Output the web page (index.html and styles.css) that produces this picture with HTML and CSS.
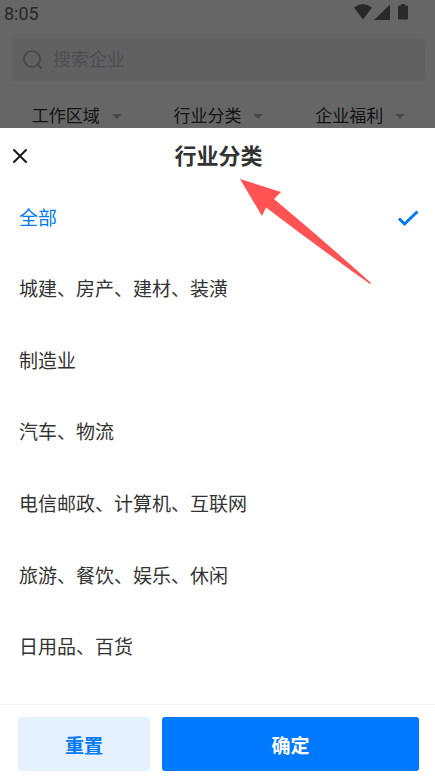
FILE: index.html
```html
<!DOCTYPE html>
<html lang="zh-CN">
<head>
<meta charset="UTF-8">
<meta name="viewport" content="width=device-width, initial-scale=1">
<title>行业分类</title>
<link rel="stylesheet" href="styles.css">
</head>
<body>
  <div class="page">
    <div class="status-bar">
      <span class="time">8:05</span>
      <svg class="status-icons" viewBox="0 0 56 18" width="56" height="18" fill="currentColor" aria-hidden="true">
        <path d="M0 4.500Q9 -2.500 18 4.500L9 16.500z"/>
        <path d="M36 1.500V17H20z"/>
        <path d="M47 1h4v1.500h2q1 0 1 1V15.500q0 1-1 1h-8q-1 0-1-1V3.500q0-1 1-1h2z"/>
      </svg>
    </div>
    <label class="search">
      <svg viewBox="0 0 20 20" width="20" height="20" fill="none" stroke="currentColor" stroke-width="2" aria-hidden="true">
        <circle cx="9" cy="9" r="8"/>
        <path d="M14.500 14.500L18.500 18.500"/>
      </svg>
      <input type="search" placeholder="搜索企业" aria-label="搜索企业">
    </label>
    <nav class="filters">
      <button type="button" class="filter">工作区域</button>
      <button type="button" class="filter">行业分类</button>
      <button type="button" class="filter">企业福利</button>
    </nav>
  </div>

  <div class="mask"></div>

  <form class="sheet">
    <header class="sheet-header">
      <button type="button" class="close" aria-label="关闭">
        <svg viewBox="0 0 16 16" width="16" height="16" fill="none" stroke="currentColor" stroke-width="2" stroke-linecap="round" aria-hidden="true">
          <path d="M2 2L14 14M14 2L2 14"/>
        </svg>
      </button>
      <h1>行业分类</h1>
    </header>

    <div class="options">
      <label class="option"><input type="radio" name="industry" checked><span>全部</span>
        <svg class="tick" viewBox="0 0 22 18" width="22" height="18" fill="none" stroke="currentColor" stroke-width="3" aria-hidden="true">
          <path d="M2 8.500L7.500 14L20.500 1.500"/>
        </svg>
      </label>
      <label class="option"><input type="radio" name="industry"><span>城建、房产、建材、装潢</span></label>
      <label class="option"><input type="radio" name="industry"><span>制造业</span></label>
      <label class="option"><input type="radio" name="industry"><span>汽车、物流</span></label>
      <label class="option"><input type="radio" name="industry"><span>电信邮政、计算机、互联网</span></label>
      <label class="option"><input type="radio" name="industry"><span>旅游、餐饮、娱乐、休闲</span></label>
      <label class="option"><input type="radio" name="industry"><span>日用品、百货</span></label>
    </div>

    <footer class="actions">
      <button type="reset" class="btn btn-reset">重置</button>
      <button type="button" class="btn btn-confirm">确定</button>
    </footer>

    <!-- arrow pointing at the title -->
    <svg class="pointer" viewBox="0 0 132 106" width="132" height="106" fill="#ff5353" aria-hidden="true">
      <path d="M0 0L41 13L34 20Q82 60 131 104L130 105Q78 68 26 28.500L22 37z"/>
    </svg>
  </form>
</body>
</html>
```

FILE: styles.css
```css
* {
  box-sizing: border-box;
}
body {
  margin: 0;
  background: #fff;
  color: #333;
  font-family: Roboto, "Noto Sans CJK SC", sans-serif;
}
button, input {
  font-family: inherit;
}
button {
  border: none;
  padding: 0;
  cursor: pointer;
}

/* page behind the sheet */
.status-bar {
  display: flex;
  justify-content: space-between;
  align-items: center;
  height: 26px;
  padding: 0 25px 0 4px;
  color: #666;
}
.time {
  font-size: 18px;
}
.status-icons {
  margin-bottom: 2px;
}
.search {
  display: flex;
  align-items: center;
  gap: 10px;
  height: 43px;
  margin: 12px 10px 0 12px;
  padding: 0 11px;
  border-radius: 4px;
  background: #f2f2f2;
  color: #b4b4b4;
}
.search input {
  flex: 1;
  min-width: 0;
  padding: 0;
  border: none;
  outline: none;
  background: none;
  font-size: 18px;
}
.search input::placeholder {
  color: #c0c4cc;
}
.filters {
  display: grid;
  grid-template-columns: repeat(3, 1fr);
  padding: 23px 4px 0 6px;
}
.filter {
  display: flex;
  justify-content: center;
  align-items: center;
  gap: 12px;
  background: none;
  color: #333;
  font-size: 17px;
  line-height: 24px;
}
.filter::after {
  content: "";
  border: 5px solid transparent;
  border-top-color: #b4b4b4;
  border-bottom: 0;
}
.mask {
  position: fixed;
  inset: 0;
  background: rgba(0, 0, 0, 0.6);
}

/* bottom sheet */
.sheet {
  position: fixed;
  inset: 128px 0 0;
  display: flex;
  flex-direction: column;
  background: #fff;
}
.sheet-header {
  display: grid;
  grid-template-columns: 40px 1fr 38px;
  align-items: center;
  padding-top: 2px;
  height: 55px;
}
.close {
  display: flex;
  padding: 10px 12px 12px;
  background: none;
  color: #1a1a1a;
}
.sheet-header h1 {
  margin: 0;
  text-align: center;
  font-size: 22px;
  font-weight: 700;
  line-height: 32px;
}
.options {
  flex: 1;
  display: grid;
  grid-auto-rows: 1fr;
  padding-bottom: 20px;
  overflow-y: auto;
}
.option {
  display: flex;
  justify-content: space-between;
  align-items: center;
  padding: 0 16px 0 19px;
  font-size: 19px;
  line-height: 28px;
  cursor: pointer;
}
.option input {
  appearance: none;
  position: absolute;
  margin: 0;
}
.option input:checked ~ * {
  color: #0079f2;
}
.option input:not(:checked) ~ .tick {
  visibility: hidden;
}
.actions {
  display: flex;
  gap: 12px;
  padding: 12px 16px 12px 18px;
  border-top: 1px solid #f5f5f5;
}
.btn {
  height: 54px;
  border-radius: 3px;
  font-size: 19px;
  font-weight: 700;
}
.btn-reset {
  width: 132px;
  background: #e5f1ff;
  color: #0079f2;
}
.btn-confirm {
  flex: 1;
  background: #0079ff;
  color: #fff;
}
.pointer {
  position: absolute;
  top: 51px;
  left: calc(50% + 22px);
  pointer-events: none;
}
```
